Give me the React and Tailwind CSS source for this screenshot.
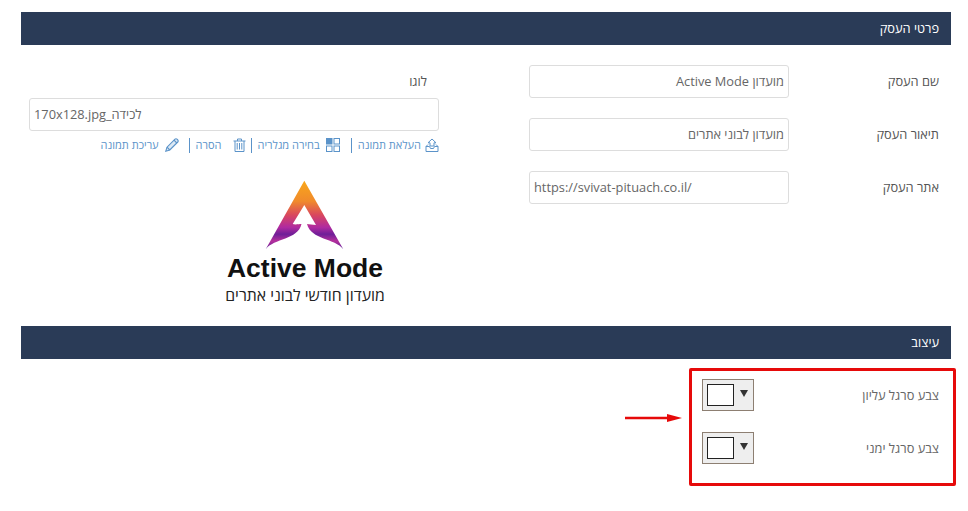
function Bar({ children }) {
  return (
    <div className="h-[33px] bg-[#2a3b57] text-white text-[12.8px] leading-[33px] pr-3">{children}</div>
  );
}

function Field({ label, value, ltr }) {
  return (
    <div className="flex items-center h-[33px]">
      <div className="w-[162px] shrink-0 pr-3 text-[12.8px] text-[#555]">{label}</div>
      <div dir={ltr ? "ltr" : "rtl"} className="w-[260px] shrink-0 h-[33px] border border-[#ddd] rounded-[3px] bg-white px-[4px] text-[12.8px] leading-[31px] text-[#666]">
        {value}
      </div>
    </div>
  );
}

function Swatch({ label }) {
  return (
    <div className="flex items-center h-[33px]">
      <div className="w-[197px] shrink-0 pr-3 text-[12.8px] text-[#666]">{label}</div>
      <div className="self-start w-[52px] h-[32px] bg-[#eeeeee] border border-[#8d7f72] flex items-start justify-between flex-row-reverse pl-1 pr-[5px] pt-1">
        <div className="w-[27px] h-[22px] bg-white border border-[#222]"></div>
        <svg width="8" height="7" viewBox="0 0 8 7" className="mt-[6px]"><path d="M0 0h8L4 7z" fill="#333" /></svg>
      </div>
    </div>
  );
}

function Action({ icon, label, wrap, gap }) {
  return (
    <div className={`flex items-center h-[15px] ${gap} ${wrap}`}>
      {icon}
      <span>{label}</span>
    </div>
  );
}

const c = "#5b93c9";

const UploadIcon = (
  <svg width="14" height="14" viewBox="0 0 14 14" fill="none" stroke={c} strokeWidth="1">
    <path d="M1 8.5v5h12v-5L11 6.5M1 8.5l2-2" />
    <path d="M1 8.5h3.5l1 2h3l1-2H13" />
    <path d="M7 1L3 4.8h2V8h4V4.8h2z" />
  </svg>
);
const GridIcon = (
  <svg width="14" height="14" viewBox="0 0 14 14" fill="none" stroke={c} strokeWidth="1">
    <rect x="0.5" y="0.5" width="5.5" height="5.5" fill={c} />
    <rect x="8" y="0.5" width="5.5" height="5.5" />
    <rect x="0.5" y="8" width="5.5" height="5.5" />
    <rect x="8" y="8" width="5.5" height="5.5" />
  </svg>
);
const TrashIcon = (
  <svg width="13" height="14" viewBox="0 0 13 14" fill="none" stroke={c} strokeWidth="1">
    <path d="M0.5 3h12M4.5 3V1h4v2M2 3v10.5h9V3" />
    <path d="M4.2 5v6.5M6.5 5v6.5M8.8 5v6.5" />
  </svg>
);
const PencilIcon = (
  <svg width="14" height="14" viewBox="0 0 14 14" fill="none" stroke={c} strokeWidth="1.1">
    <path d="M0.8 13.2l1.2-4L10 1.2a1.4 1.4 0 0 1 2 0l.8.8a1.4 1.4 0 0 1 0 2L4.8 12z" fill="#dbe8f4" />
    <path d="M2 9.2l2.8 2.8M9 2.2l2.8 2.8" />
  </svg>
);

function Logo() {
  return (
    <div className="flex flex-col items-center w-[170px] mr-[49px]">
      <svg width="80" height="70" viewBox="0 0 80 70">
        <defs>
          <linearGradient id="g" x1="0" y1="0" x2="0" y2="1">
            <stop offset="0" stopColor="#f9a81a" />
            <stop offset="0.3" stopColor="#f08a2c" />
            <stop offset="0.5" stopColor="#d9475e" />
            <stop offset="0.68" stopColor="#b02aa0" />
            <stop offset="0.78" stopColor="#6f1f98" />
            <stop offset="0.88" stopColor="#b5309c" />
            <stop offset="1" stopColor="#5a1f9a" />
          </linearGradient>
        </defs>
        <path fill="url(#g)" d="M39.3 0.7L78.3 69.3C70 58 46 60 42 44C44 44 48 45 51 45L39.3 25L27.7 44C30 45 34 44 36.5 44C33 60 9 58 0.7 69.3Z" />
      </svg>
      <div dir="ltr" className="whitespace-nowrap font-['Liberation_Sans',sans-serif] font-bold text-[26.5px] leading-[30px] mt-[3px] text-[#111]">Active Mode</div>
      <div className="whitespace-nowrap text-[15.8px] leading-[24px] text-[#222]">מועדון חודשי לבוני אתרים</div>
    </div>
  );
}

export default function App() {
  return (
    <div dir="rtl" className="relative w-[968px] h-[511px] bg-white overflow-hidden pt-3 pr-[17px] pl-[21px] font-['Open_Sans','Noto_Sans',sans-serif]">
      <Bar>פרטי העסק</Bar>
      <div className="flex h-[281px]">
        <div className="w-[422px] shrink-0 flex flex-col gap-5 pt-5">
          <Field label="שם העסק" value="מועדון Active Mode" />
          <Field label="תיאור העסק" value="מועדון לבוני אתרים" />
          <Field label="אתר העסק" value="https://svivat-pituach.co.il/" ltr />
        </div>
        <div className="w-[410px] shrink-0 mr-[90px] flex flex-col pt-[26px]">
          <div className="text-[12.8px] leading-[20px] text-[#555] pr-3">לוגו</div>
          <div dir="ltr" className="mt-[7px] h-[33px] border border-[#ddd] rounded-[3px] px-[4px] text-[12.8px] leading-[31px] text-[#666] text-left">
            170x128.jpg_לכידה
          </div>
          <div className="flex text-[11px] text-[#5b93c9] mt-[6px] h-[16px] items-center">
            <Action icon={UploadIcon} label="העלאת תמונה" gap="gap-[4px]" wrap="border-l border-[#5b93c9] pl-[6px] ml-[11px]" />
            <Action icon={GridIcon} label="בחירה מגלריה" gap="gap-[6px]" wrap="border-l border-[#5b93c9] pl-[6px] ml-[5px]" />
            <Action icon={TrashIcon} label="הסרה" gap="gap-[11px]" wrap="border-l border-[#5b93c9] pl-[6px] ml-[10px]" />
            <Action icon={PencilIcon} label="עריכת תמונה" gap="gap-[6px]" wrap="" />
          </div>
          <div className="mt-[27px]"><Logo /></div>
        </div>
      </div>
      <Bar>עיצוב</Bar>
      <div className="flex flex-col gap-5 pt-5">
        <Swatch label="צבע סרגל עליון" />
        <Swatch label="צבע סרגל ימני" />
      </div>
      <div className="absolute left-[689px] top-[368px] w-[267px] h-[118px] border-[3px] border-[#e60a0a] rounded-[2px]"></div>
      <svg className="absolute left-[625px] top-[412px]" width="58" height="12" viewBox="0 0 58 12">
        <path d="M0 6h44" stroke="#e60a0a" strokeWidth="2.4" />
        <path d="M42 2l15 4-15 4z" fill="#e60a0a" />
      </svg>
    </div>
  );
}
